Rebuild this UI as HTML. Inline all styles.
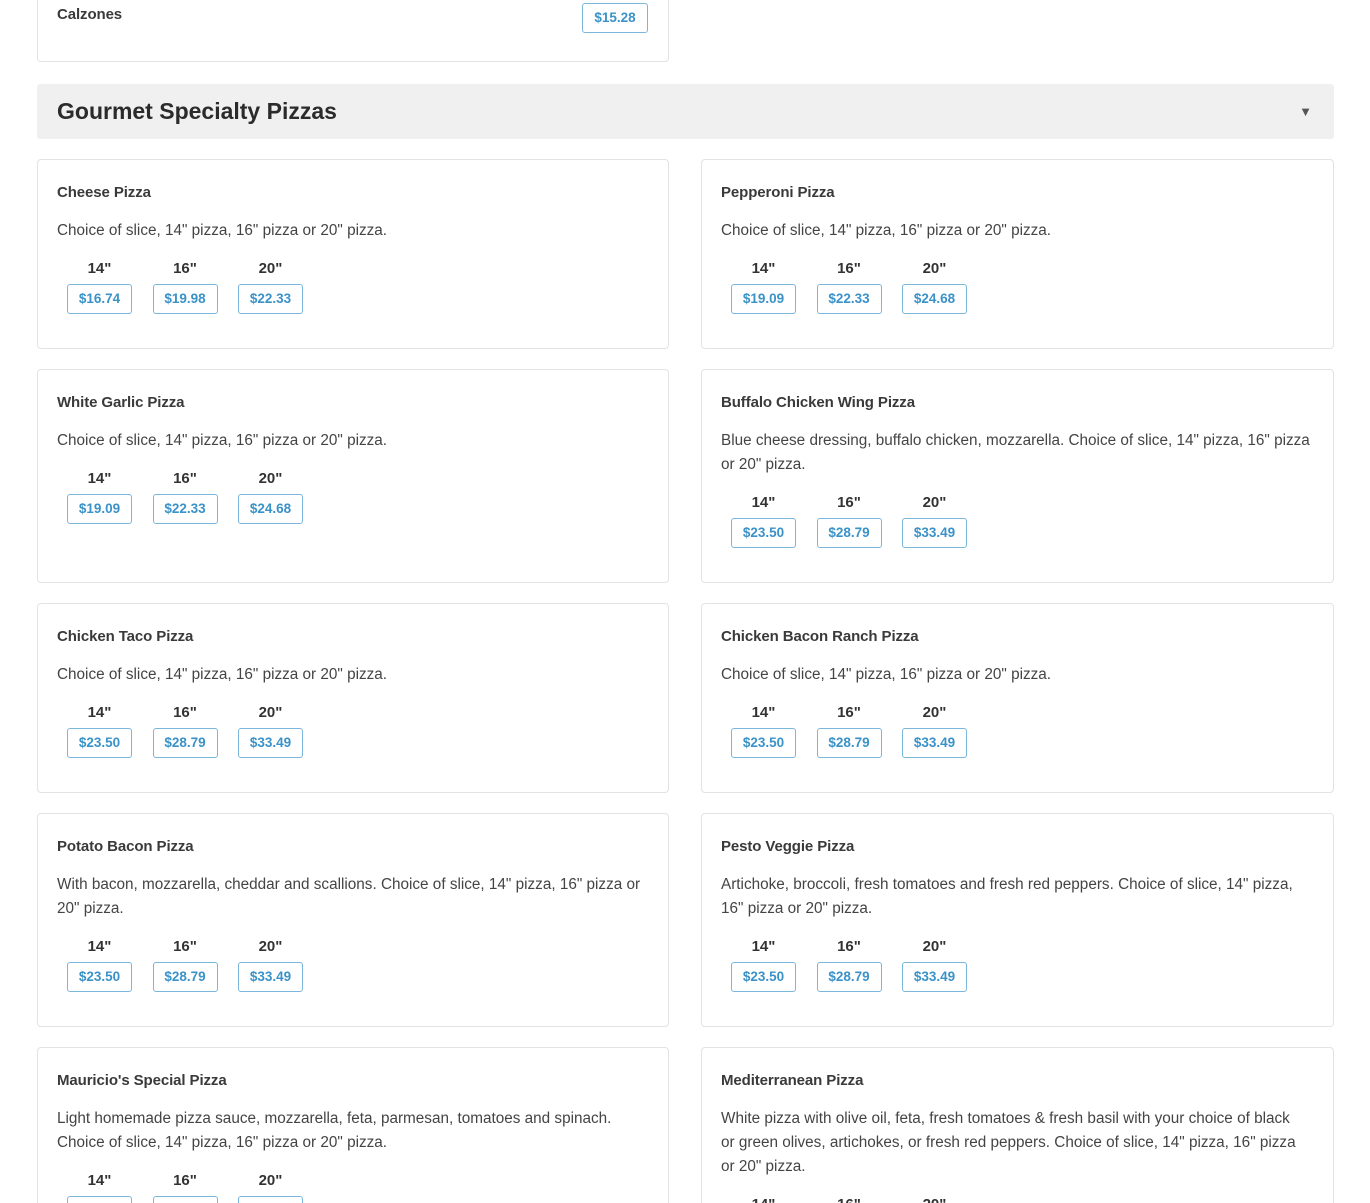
<!DOCTYPE html>
<html style="overflow:hidden;height:1203px"><head><meta charset="utf-8"><style>
*{box-sizing:border-box;margin:0;padding:0}
body{width:1370px;height:1203px;overflow:hidden;background:#fff;font-family:"Liberation Sans",Arial,sans-serif;color:#333;position:relative}
.card{position:absolute;border:1px solid #e3e3e3;border-radius:4px;background:#fff;padding:22px 20px 0 19px}
.l{left:37px;width:632px}.r{left:701px;width:633px}
.t{font-size:15px;font-weight:bold;line-height:22px;color:#3a3a3a;letter-spacing:-0.1px}
.d{margin-top:15px;font-size:15.3px;line-height:24px;color:#444;white-space:nowrap}
.sz{display:flex;margin-top:14px;margin-left:10px}
.c{width:65px;margin-right:20.5px;text-align:center}
.c b{display:block;font-size:15px;line-height:24px;color:#333}
.p{margin-top:3px;height:30px;border:1px solid #7bb7dc;border-radius:3px;color:#3a92c8;font-weight:bold;font-size:13.5px;line-height:28px;text-align:center}
.hdr{position:absolute;left:37px;top:84px;width:1297px;height:55px;background:#f0f0f0;border-radius:3px}
.hdr h2{position:absolute;left:20px;top:0;line-height:55px;font-size:23px;font-weight:bold;color:#2b2b2b}
.hdr span{position:absolute;right:22px;top:20px;font-size:13px;color:#555}
</style></head><body>
<div class="card l" style="top:-10px;height:72px;padding-top:13px"><div class="t">Calzones</div>
<div class="p" style="position:absolute;left:544px;top:12px;width:66px;margin:0">$15.28</div></div>
<div class="hdr"><h2>Gourmet Specialty Pizzas</h2><span>▼</span></div>

<div class="card l" style="top:159px;height:190px"><div class="t">Cheese Pizza</div><div class="d">Choice of slice, 14" pizza, 16" pizza or 20" pizza.</div>
<div class="sz"><div class="c"><b>14"</b><div class="p">$16.74</div></div><div class="c"><b>16"</b><div class="p">$19.98</div></div><div class="c"><b>20"</b><div class="p">$22.33</div></div></div></div>
<div class="card r" style="top:159px;height:190px"><div class="t">Pepperoni Pizza</div><div class="d">Choice of slice, 14" pizza, 16" pizza or 20" pizza.</div>
<div class="sz"><div class="c"><b>14"</b><div class="p">$19.09</div></div><div class="c"><b>16"</b><div class="p">$22.33</div></div><div class="c"><b>20"</b><div class="p">$24.68</div></div></div></div>

<div class="card l" style="top:369px;height:214px"><div class="t">White Garlic Pizza</div><div class="d">Choice of slice, 14" pizza, 16" pizza or 20" pizza.</div>
<div class="sz"><div class="c"><b>14"</b><div class="p">$19.09</div></div><div class="c"><b>16"</b><div class="p">$22.33</div></div><div class="c"><b>20"</b><div class="p">$24.68</div></div></div></div>
<div class="card r" style="top:369px;height:214px"><div class="t">Buffalo Chicken Wing Pizza</div><div class="d">Blue cheese dressing, buffalo chicken, mozzarella. Choice of slice, 14" pizza, 16" pizza<br>or 20" pizza.</div>
<div class="sz"><div class="c"><b>14"</b><div class="p">$23.50</div></div><div class="c"><b>16"</b><div class="p">$28.79</div></div><div class="c"><b>20"</b><div class="p">$33.49</div></div></div></div>

<div class="card l" style="top:603px;height:190px"><div class="t">Chicken Taco Pizza</div><div class="d">Choice of slice, 14" pizza, 16" pizza or 20" pizza.</div>
<div class="sz"><div class="c"><b>14"</b><div class="p">$23.50</div></div><div class="c"><b>16"</b><div class="p">$28.79</div></div><div class="c"><b>20"</b><div class="p">$33.49</div></div></div></div>
<div class="card r" style="top:603px;height:190px"><div class="t">Chicken Bacon Ranch Pizza</div><div class="d">Choice of slice, 14" pizza, 16" pizza or 20" pizza.</div>
<div class="sz"><div class="c"><b>14"</b><div class="p">$23.50</div></div><div class="c"><b>16"</b><div class="p">$28.79</div></div><div class="c"><b>20"</b><div class="p">$33.49</div></div></div></div>

<div class="card l" style="top:813px;height:214px"><div class="t">Potato Bacon Pizza</div><div class="d">With bacon, mozzarella, cheddar and scallions. Choice of slice, 14" pizza, 16" pizza or<br>20" pizza.</div>
<div class="sz"><div class="c"><b>14"</b><div class="p">$23.50</div></div><div class="c"><b>16"</b><div class="p">$28.79</div></div><div class="c"><b>20"</b><div class="p">$33.49</div></div></div></div>
<div class="card r" style="top:813px;height:214px"><div class="t">Pesto Veggie Pizza</div><div class="d">Artichoke, broccoli, fresh tomatoes and fresh red peppers. Choice of slice, 14" pizza,<br>16" pizza or 20" pizza.</div>
<div class="sz"><div class="c"><b>14"</b><div class="p">$23.50</div></div><div class="c"><b>16"</b><div class="p">$28.79</div></div><div class="c"><b>20"</b><div class="p">$33.49</div></div></div></div>

<div class="card l" style="top:1047px;height:160px;overflow:hidden"><div class="t">Mauricio's Special Pizza</div><div class="d">Light homemade pizza sauce, mozzarella, feta, parmesan, tomatoes and spinach.<br>Choice of slice, 14" pizza, 16" pizza or 20" pizza.</div>
<div class="sz"><div class="c"><b>14"</b><div class="p">$23.50</div></div><div class="c"><b>16"</b><div class="p">$28.79</div></div><div class="c"><b>20"</b><div class="p">$33.49</div></div></div></div>
<div class="card r" style="top:1047px;height:160px;overflow:hidden"><div class="t">Mediterranean Pizza</div><div class="d">White pizza with olive oil, feta, fresh tomatoes &amp; fresh basil with your choice of black<br>or green olives, artichokes, or fresh red peppers. Choice of slice, 14" pizza, 16" pizza<br>or 20" pizza.</div>
<div class="sz"><div class="c"><b>14"</b><div class="p">$23.50</div></div><div class="c"><b>16"</b><div class="p">$28.79</div></div><div class="c"><b>20"</b><div class="p">$33.49</div></div></div></div>
</body></html>
